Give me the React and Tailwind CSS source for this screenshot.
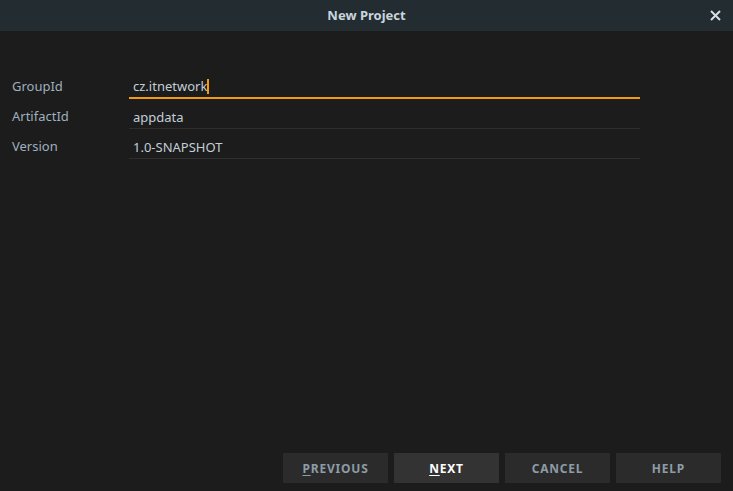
import { useState } from "react";

const fields = [
  { label: "GroupId", value: "cz.itnetwork", active: true },
  { label: "ArtifactId", value: "appdata" },
  { label: "Version", value: "1.0-SNAPSHOT" },
];

const buttons = [
  { key: "P", rest: "REVIOUS" },
  { key: "N", rest: "EXT", primary: true },
  { key: "", rest: "CANCEL" },
  { key: "", rest: "HELP" },
];

export default function App() {
  const [values] = useState(fields);

  return (
    <div
      className="w-[733px] h-[491px] bg-[#1c1c1c] flex flex-col overflow-hidden"
      style={{ fontFamily: '"Noto Sans", "Open Sans", sans-serif' }}
    >
      <div className="h-[31px] bg-[#232c31] flex items-center justify-center relative shrink-0">
        <span className="text-[13px] font-bold text-[#c9d5dd]">New Project</span>
        <svg
          className="absolute right-[12px] top-[10px]"
          width="11"
          height="11"
          viewBox="0 0 11 11"
        >
          <path d="M1 1 L10 10 M10 1 L1 10" stroke="#d6dee3" strokeWidth="2" />
        </svg>
      </div>

      <div className="pt-[38px] flex-1">
        {values.map((f) => (
          <div key={f.label} className="flex h-[30px]">
            <div className="w-[129px] pl-[12px] flex items-end pb-[3px]">
              <span className="text-[13px] leading-[20px] text-[#9fb0bc]">{f.label}</span>
            </div>
            <div
              className={
                "w-[511px] flex items-end pl-[4px] pb-[1px] " +
                (f.active ? "border-b-2 border-[#f39a0e]" : "border-b border-[#2e2e2e]")
              }
            >
              <span className="text-[13px] leading-[20px] text-[#c3ced6] flex items-center">
                {f.value}
                {f.active && <span className="inline-block w-[2px] h-[15px] bg-[#f39a0e]" />}
              </span>
            </div>
          </div>
        ))}
      </div>

      <div className="flex justify-end gap-[6px] pr-[12px] pb-[8px]">
        {buttons.map((b) => (
          <button
            key={b.rest}
            className={
              "w-[105px] h-[30px] flex items-center justify-center pt-[2px] text-[12px] font-bold tracking-[0.8px] " +
              (b.primary ? "bg-[#333333] text-white" : "bg-[#2b2b2b] text-[#8d9ca6]")
            }
          >
            {b.key && <span className="underline underline-offset-2">{b.key}</span>}
            {b.rest}
          </button>
        ))}
      </div>
    </div>
  );
}
